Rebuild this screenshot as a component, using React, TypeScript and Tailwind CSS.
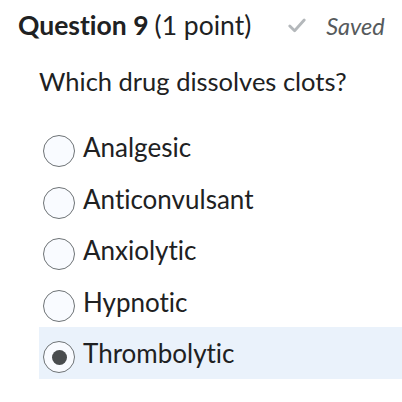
import React from "react";

const options = ["Analgesic", "Anticonvulsant", "Anxiolytic", "Hypnotic", "Thrombolytic"];
const selected = "Thrombolytic";

function Radio({ checked }: { checked: boolean }) {
  return (
    <span className="mt-[14px] flex h-[32px] w-[32px] shrink-0 items-center justify-center rounded-full border border-[#6e7376] bg-[#f9fbff]">
      {checked && <span className="h-[15px] w-[15px] rounded-full bg-[#494c4e]" />}
    </span>
  );
}

export default function App() {
  return (
    <div
      className="h-[402px] w-[402px] bg-white text-[#202122] [font-variant-ligatures:none]"
      style={{ fontFamily: "Lato, 'Noto Sans', sans-serif" }}
    >
      <div className="flex items-center pl-[18px] pt-[10px]">
        <span className="text-[26.5px] font-bold leading-[1.2]">Question 9</span>
        <span className="ml-[6px] text-[26.5px] leading-[1.2]">(1 point)</span>
        <svg className="ml-[37px]" width="18" height="15" viewBox="0 0 18 15" fill="none">
          <path d="M1.8 8 L6.6 12.8 L16.2 2" stroke="#b4b8bb" strokeWidth="2.8" strokeLinecap="round" strokeLinejoin="round" />
        </svg>
        <span className="ml-[20px] text-[23.5px] italic leading-[1.2] text-[#565a5c]">Saved</span>
      </div>
      <div className="pl-[39px] pt-[24px] text-[25.5px] leading-[1.2]">Which drug dissolves clots?</div>
      <div className="ml-[39px] mt-[25px] flex flex-col">
        {options.map((o) => (
          <div
            key={o}
            className={`flex h-[51.5px] items-start gap-[8px] pl-[4px] ${o === selected ? "bg-[#eaf2fb]" : ""}`}
          >
            <Radio checked={o === selected} />
            <span className="mt-[11px] text-[26px] leading-[1.2]">{o}</span>
          </div>
        ))}
      </div>
    </div>
  );
}
